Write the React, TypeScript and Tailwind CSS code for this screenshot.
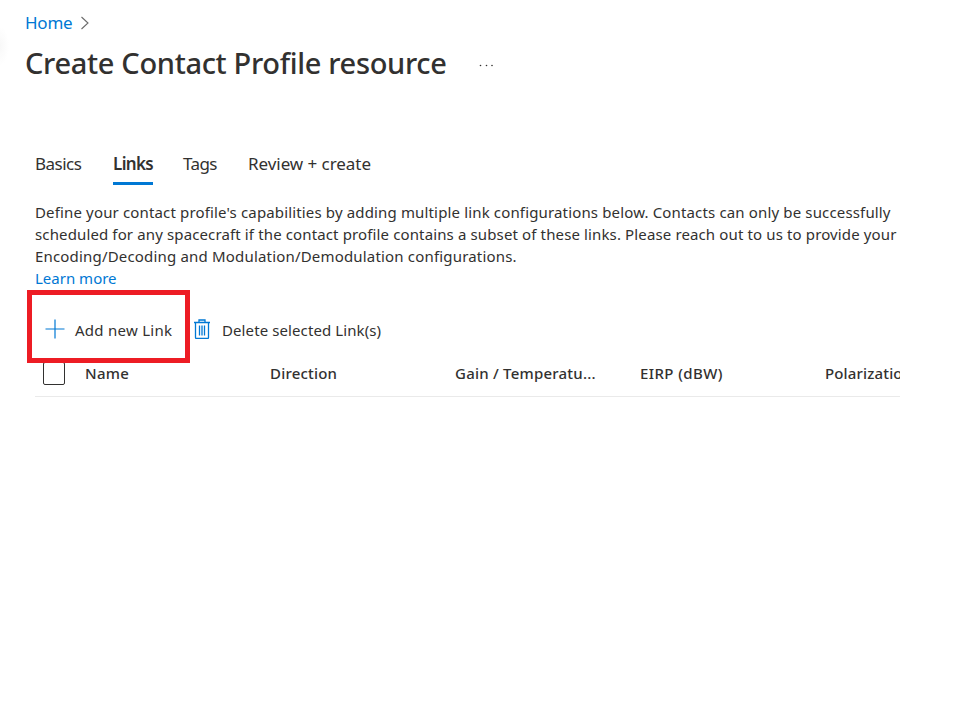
import React from "react";

const columns = [
  { label: "Name", tracking: "tracking-[0.25px]" },
  { label: "Direction", tracking: "tracking-[0.2px]" },
  { label: "Gain / Temperatu...", tracking: "tracking-[0.22px]" },
  { label: "EIRP (dBW)", tracking: "tracking-[0.4px]" },
  { label: "Polarization", tracking: "tracking-[0.15px]" },
];

function Breadcrumb() {
  return (
    <nav className="flex h-[23px] items-center text-[17px] leading-[23px]">
      <a className="w-[47px] whitespace-nowrap tracking-[-0.25px] text-[#0078d4]">Home</a>
      <svg className="ml-2 mt-px" width="10" height="14" viewBox="0 0 10 14" fill="none" stroke="#6b6b6b" strokeWidth="1.1">
        <path d="M1.5 1 8 7 1.5 13" />
      </svg>
    </nav>
  );
}

function Tabs() {
  return (
    <div className="flex h-[33px] text-[17px] leading-[24px] whitespace-nowrap">
      <div className="w-[78px] tracking-[-0.5px]">Basics</div>
      <div className="w-10 border-b-3 border-[#0078d4] font-semibold tracking-[-0.65px]">Links</div>
      <div className="ml-[30px] w-[65px] tracking-[-0.6px]">Tags</div>
      <div className="tracking-[-0.05px]">Review + create</div>
    </div>
  );
}

function Toolbar() {
  return (
    <div className="flex h-[72px] w-[500px] items-center">
      <button className="z-10 flex h-[73px] w-[163px] shrink-0 items-center border-5 border-[#ed1c24] pt-1.5 pl-[13px]">
        <svg width="20" height="20" viewBox="0 0 20 20" fill="none" stroke="#0078d4" strokeWidth="1.2">
          <path d="M10 .5v19M.5 10h19" />
        </svg>
        <span className="ml-[10px] pt-[2px] text-[15px] tracking-[0.27px] whitespace-nowrap">Add new Link</span>
      </button>
      <button className="flex items-center pt-1.5 pl-1">
        <svg width="16" height="20" viewBox="0 0 16 20" fill="none" stroke="#0078d4" strokeWidth="1.3">
          <path d="M0 3.5h16M5 3V1h6v2M1.5 3.5v15q0 1 1 1h11q1 0 1-1v-15M5.5 6.5v10M8 6.5v10M10.5 6.5v10" />
        </svg>
        <span className="ml-3 pt-[2px] text-[15px] tracking-[0.1px] whitespace-nowrap">Delete selected Link(s)</span>
      </button>
    </div>
  );
}

export default function App() {
  return (
    <main className="relative h-[704px] w-[963px] overflow-hidden bg-white font-['Noto_Sans','Open_Sans',sans-serif] text-[#323130]">
      <div className="absolute top-[26px] left-0 h-[40px] w-[9px] bg-[radial-gradient(ellipse_at_left,#f8f8f8,#ffffff_70%)]" />
      <header className="h-[152px] pt-[11px] pl-[25px]">
        <Breadcrumb />
        <div className="mt-[9px] flex h-[40px] items-center">
          <h1 className="w-[422px] text-[29px] leading-[40px] font-medium tracking-[-0.33px] whitespace-nowrap">Create Contact Profile resource</h1>
          <svg className="mt-[4px] ml-[31px]" width="16" height="4" viewBox="0 0 16 4" fill="#323130">
            <circle cx="2.5" cy="2.5" r=".8" /><circle cx="8.5" cy="2.5" r=".8" /><circle cx="14" cy="2.5" r=".8" />
          </svg>
        </div>
      </header>
      <section className="ml-[35px] w-[865px]">
        <Tabs />
        <div className="mt-4 text-[15px] leading-[22px] whitespace-nowrap">
          <p className="tracking-[0.15px]">Define your contact profile's capabilities by adding multiple link configurations below. Contacts can only be successfully</p>
          <p className="tracking-[0.13px]">scheduled for any spacecraft if the contact profile contains a subset of these links. Please reach out to us to provide your</p>
          <p className="tracking-[0.18px]">Encoding/Decoding and Modulation/Demodulation configurations.</p>
          <a className="block text-[#0078d4]">Learn more</a>
        </div>
        <div className="mt-px -ml-2"><Toolbar /></div>
        <div className="flex h-[35px] overflow-hidden border-b border-[#eaeaea] text-[15px] leading-[22px] font-medium">
          <div className="w-[50px] shrink-0 pl-2">
            <div className="h-[23px] w-[22px] rounded-[2px] border border-[#323130]" />
          </div>
          {columns.map(({ label, tracking }) => (
            <div key={label} className={`w-[185px] shrink-0 whitespace-nowrap ${tracking}`}>{label}</div>
          ))}
        </div>
      </section>
    </main>
  );
}
